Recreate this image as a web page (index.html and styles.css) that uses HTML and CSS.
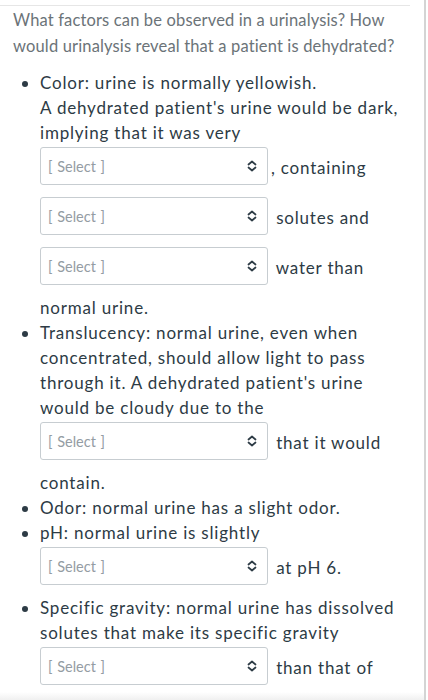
FILE: index.html
```html
<!DOCTYPE html>
<html>
<head>
<meta charset="utf-8">
<link rel="stylesheet" href="styles.css">
</head>
<body>
<div class="frame">
  <div class="content">
    <p class="question">What factors can be observed in a urinalysis? How would urinalysis reveal that a patient is dehydrated?</p>
    <ul class="answers">
      <li>Color: urine is normally yellowish.<br>A dehydrated patient's urine would be dark, implying that it was very <span class="sel"><span class="ph">[ Select ]</span><svg class="chev" viewBox="0 0 10 12" width="10" height="12"><path d="M1.5 4.5 L5 1.5 L8.5 4.5 M1.5 7.5 L5 10.5 L8.5 7.5" fill="none" stroke="#2d3b45" stroke-width="1.7" stroke-linecap="round" stroke-linejoin="round"/></svg></span>, containing <span class="sel"><span class="ph">[ Select ]</span><svg class="chev" viewBox="0 0 10 12" width="10" height="12"><path d="M1.5 4.5 L5 1.5 L8.5 4.5 M1.5 7.5 L5 10.5 L8.5 7.5" fill="none" stroke="#2d3b45" stroke-width="1.7" stroke-linecap="round" stroke-linejoin="round"/></svg></span> solutes and <span class="sel"><span class="ph">[ Select ]</span><svg class="chev" viewBox="0 0 10 12" width="10" height="12"><path d="M1.5 4.5 L5 1.5 L8.5 4.5 M1.5 7.5 L5 10.5 L8.5 7.5" fill="none" stroke="#2d3b45" stroke-width="1.7" stroke-linecap="round" stroke-linejoin="round"/></svg></span> water than normal urine.</li>
      <li>Translucency: normal urine, even when concentrated, should allow light to pass through it. A dehydrated patient's urine would be cloudy due to the <span class="sel"><span class="ph">[ Select ]</span><svg class="chev" viewBox="0 0 10 12" width="10" height="12"><path d="M1.5 4.5 L5 1.5 L8.5 4.5 M1.5 7.5 L5 10.5 L8.5 7.5" fill="none" stroke="#2d3b45" stroke-width="1.7" stroke-linecap="round" stroke-linejoin="round"/></svg></span> that it would contain.</li>
      <li>Odor: normal urine has a slight odor.</li>
      <li>pH: normal urine is slightly <span class="sel"><span class="ph">[ Select ]</span><svg class="chev" viewBox="0 0 10 12" width="10" height="12"><path d="M1.5 4.5 L5 1.5 L8.5 4.5 M1.5 7.5 L5 10.5 L8.5 7.5" fill="none" stroke="#2d3b45" stroke-width="1.7" stroke-linecap="round" stroke-linejoin="round"/></svg></span> at pH 6.</li>
      <li>Specific gravity: normal urine has dissolved solutes that make its specific gravity <span class="sel"><span class="ph">[ Select ]</span><svg class="chev" viewBox="0 0 10 12" width="10" height="12"><path d="M1.5 4.5 L5 1.5 L8.5 4.5 M1.5 7.5 L5 10.5 L8.5 7.5" fill="none" stroke="#2d3b45" stroke-width="1.7" stroke-linecap="round" stroke-linejoin="round"/></svg></span> than that of normal urine.</li>
    </ul>
  </div>
  <div class="rail"></div>
</div>
<div class="shade"></div>
</body>
</html>
```
FILE: styles.css
```css
html, body {
  margin: 0;
  padding: 0;
  background: #ffffff;
  height: 700px;
  overflow: hidden;
}
body {
  font-family: Lato, "Open Sans", sans-serif;
  position: relative;
}
.frame {
  display: flex;
  height: 700px;
}
.content {
  width: 410px;
  flex: none;
  padding-top: 5px;
}
.question {
  margin: 0;
  border-top: 1px solid #e6e6e6;
  padding: 1px 10px 0 13px;
  font-size: 16.5px;
  line-height: 26px;
  color: #6b7378;
  letter-spacing: 0.15px;
}
.answers {
  margin: 11px 0 0 0;
  padding: 0 4px 0 40px;
  font-size: 17px;
  line-height: 25px;
  color: #2d3b45;
  letter-spacing: 0.8px;
}
.answers li {
  margin: 0;
}
.sel {
  display: inline-flex;
  align-items: center;
  justify-content: space-between;
  box-sizing: border-box;
  width: 228px;
  height: 38px;
  margin: 2px 3px 10px 0;
  padding: 0 10px 0 7px;
  border: 1px solid #c7cdd1;
  border-radius: 3px;
  background: #ffffff;
  vertical-align: middle;
  letter-spacing: 0;
}
.ph {
  font-size: 14.5px;
  color: #949ca3;
  word-spacing: 1px;
}
.chev {
  display: block;
}
.rail {
  flex: none;
  width: 14px;
  border-right: 2px solid #d4d4d4;
  margin-right: 2px;
}
.shade {
  position: absolute;
  left: 0;
  right: 4px;
  bottom: 0;
  height: 8px;
  background: linear-gradient(#ffffff, #f0f0f0);
}
```
